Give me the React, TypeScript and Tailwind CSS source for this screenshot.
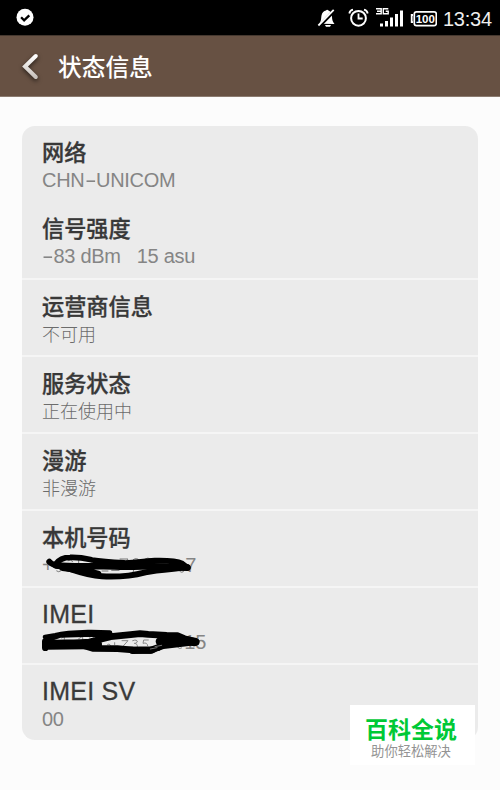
import React from "react";

const cjk = "font-['Noto_Sans_CJK_SC',sans-serif]";
const latin = "font-['Liberation_Sans','Noto_Sans_CJK_SC',sans-serif]";

function Dash() {
  return <span className="inline-block w-[11.4px] origin-left scale-x-[1.75]">-</span>;
}

function Title({ children, western = false }: { children: React.ReactNode; western?: boolean }) {
  return western ? (
    <div className={`${latin} h-[31px] text-[25px] leading-[32px] tracking-[0.25px] text-[#3a3a3a] [-webkit-text-stroke:0.3px_#3a3a3a]`}>{children}</div>
  ) : (
    <div className={`${cjk} h-[31px] text-[22.2px] leading-[30px] font-medium text-[#383838] [-webkit-text-stroke:0.3px_#383838]`}>{children}</div>
  );
}

function Value({ children, western = false }: { children: React.ReactNode; western?: boolean }) {
  return western ? (
    <div className={`${latin} h-[25px] whitespace-pre text-[20px] leading-[26px] tracking-[-0.26px] text-[#858585]`}>{children}</div>
  ) : (
    <div className={`${cjk} h-[25px] text-[18px] leading-[25px] font-light text-[#6c6c6c]`}>{children}</div>
  );
}

function Row({ children, first = false, last = false }: { children: React.ReactNode; first?: boolean; last?: boolean }) {
  return (
    <div className={`pt-[10px] pl-5 ${first ? "h-[76.4px]" : "h-[77.15px]"} ${first || last ? "" : "border-b-2 border-[#f5f5f5]"}`}>{children}</div>
  );
}

function PhoneScribble() {
  return (
    <svg className="absolute -left-3 -top-[7px]" width="190" height="45" viewBox="0 0 570 135" fill="none" stroke="#000" strokeLinecap="round" strokeLinejoin="round">
      <path d="M114 47q8-5 14 2M146 46v8M176 49h10M270 42h24l-10 14M310 44q10-8 18 2M345 42q8-6 18 0M372 60q10 8 20 0M405 60q8 6 16 0M216 78h18M245 76h22M312 74q-8 10 4 9M446 72q4 14 14 8q8-8 0-16M80 78q6 5 12 0" stroke="#777" strokeWidth="3" />
      <path d="M58 50C70 63 86 62 104 67C138 78 174 92 215 94C266 97 312 91 346 82C378 75 414 73 472 67" strokeWidth="18" />
      <path d="M76 58C88 42 102 37 120 37C154 36 166 40 186 45C220 50 254 52 286 54C324 54 337 48 374 47C414 46 442 49 457 56L473 68" strokeWidth="17" />
      <path d="M78 61C138 67 196 62 254 64C322 67 371 60 428 66L472 68M98 68L166 77L204 87" strokeWidth="20" />
    </svg>
  );
}

function ImeiScribble() {
  return (
    <svg className="absolute -left-3 -top-[9px]" width="190" height="45" viewBox="0 0 570 135" fill="none" stroke="#000" strokeLinecap="round" strokeLinejoin="round">
      <path d="M95 54l8-4v8M146 56l12-7v10M178 51q8-6 14 1M232 74q5-6 10 2M254 74v-6M276 62h18l-16 18M308 62q14-5 14 4q-4 5-9 4q11 1 9 11M355 60h-14l-2 10q13-4 14 7M443 82q5 7 12 2" stroke="#888" strokeWidth="3" />
      <path d="M45 51L76 46C110 37 145 37 184 36L240 38M46 62L92 46L184 43L244 46" strokeWidth="14" />
      <path d="M46 65L46 83M52 70C92 68 145 69 178 66L242 50L302 44L330 41L355 43L410 46L442 47L463 56L499 66M50 79L166 78" strokeWidth="20" />
      <path d="M51 71L184 71L206 73M158 76L188 85L262 86L309 90L360 91L400 77L494 66" strokeWidth="20" />
      <path d="M390 64L412 54L456 59L494 66" strokeWidth="26" />
      <path d="M278 87L385 86M306 95L365 94L395 80" strokeWidth="14" />
      <path d="M361 87L381 83M375 80L395 76" stroke="#aaa" strokeWidth="2" />
    </svg>
  );
}

function StatusBar() {
  return (
    <header className="flex h-[35px] items-center bg-black text-white">
      <svg className="ml-4" width="18" height="35" viewBox="0 0 18 35"><circle cx="9" cy="17.3" r="8.5" fill="white" /><path d="M5.1 17.3l3 3 5.2-5" fill="none" stroke="black" strokeWidth="2.3" /></svg>
      <svg className="ml-auto" width="120" height="35" viewBox="317 0 120 35" fill="none">
        <path d="M319 23.8C321.5 21.5 321 18 321.5 15.5C322 12.5 324 11 326 10.5Q327 9 328.5 10.5C331 11.5 332 14 332 17C332 20 333 22 334.5 24ZM325 25h6l-1 1.8h-4z" fill="#fff" />
        <path d="M318.8 26.5L334 11" stroke="#000" strokeWidth="3.5" />
        <path d="M318.4 25.5L333.7 9.8" stroke="#fff" strokeWidth="1.8" />
        <circle cx="358.5" cy="18.3" r="7.4" stroke="#fff" strokeWidth="2" />
        <path d="M358.5 13.5v5h4.2M349.3 13.5c.4-2 1.7-3.4 3.7-3.8M367.7 13.5c-.4-2-1.7-3.4-3.7-3.8" stroke="#fff" strokeWidth="1.8" />
        <path d="M376 8.8h5.2v5H376M377 11.3h4M388.3 8.8h-5v5h4.9v-2.6h-2.5" stroke="#fff" strokeWidth="1.4" />
        <path d="M380 23.5h3v3h-3zM385 21h3v5.5h-3zM390 17.5h3v9h-3zM395 14h3v12.5h-3zM400 10.5h3v16h-3z" fill="#fff" />
        <rect x="414.3" y="11.8" width="22" height="13.8" rx="2.2" stroke="#fff" strokeWidth="1.7" />
        <path d="M413 15h-1.3v7.2h1.3" stroke="#fff" strokeWidth="1.8" />
        <text x="425.3" y="23" textAnchor="middle" textLength="19" fill="#fff" fontFamily="Liberation Sans, sans-serif" fontSize="11.5" fontWeight="bold">100</text>
      </svg>
      <span className={`${latin} mr-2 ml-[6px] mt-[3px] w-[49px] text-[20px] leading-8 tracking-[-0.25px] text-[#eee]`}>13:34</span>
    </header>
  );
}

export default function App() {
  return (
    <main className="relative h-[790px] w-[500px] overflow-hidden bg-[#fcfcfc]">
      <StatusBar />
      <nav className="flex h-[62px] items-center border-t border-b border-t-[#45382f] border-b-[#8b7b70] bg-[#675143]">
        <svg className="ml-5 drop-shadow-[0_2px_2px_rgba(0,0,0,0.6)]" width="22" height="30" viewBox="0 0 22 30">
          <defs><linearGradient id="back" x1="0" x2="0" y1="0" y2="1"><stop stopColor="#fff" /><stop offset="1" stopColor="#c9c2bd" /></linearGradient></defs>
          <path d="M15.8 5L5 15.5L15.8 26" fill="none" stroke="url(#back)" strokeWidth="4" strokeLinecap="round" />
        </svg>
        <h1 className={`${cjk} ml-[16px] text-[23.7px] leading-8 font-medium text-white`}>状态信息</h1>
      </nav>
      <section className="mx-[22px] mt-[29px] h-[614px] overflow-hidden rounded-[13px] bg-[#ebebeb]">
        <Row first><Title>网络</Title><Value western>CHN<Dash />UNICOM</Value></Row>
        <Row><Title>信号强度</Title><Value western><Dash />83 dBm{"  "} 15 asu</Value></Row>
        <Row><Title>运营商信息</Title><Value>不可用</Value></Row>
        <Row><Title>服务状态</Title><Value>正在使用中</Value></Row>
        <Row><Title>漫游</Title><Value>非漫游</Value></Row>
        <Row><Title>本机号码</Title><div className="relative w-[154px]"><Value western><span className="flex justify-between"><span>+</span><span>7</span></span></Value><PhoneScribble /></div></Row>
        <Row><Title western>IMEI</Title><div className="relative w-[164px]"><Value western><span className="block text-right">15</span></Value><ImeiScribble /></div></Row>
        <Row last><Title western>IMEI SV</Title><Value western>00</Value></Row>
      </section>
      <aside className={`${cjk} absolute left-[350px] top-[705px] flex h-[60px] w-[125px] flex-col items-center bg-white pt-[8px] pr-[3px]`}>
        <div className="h-[29px] text-[23px] leading-[30px] font-bold text-[#00c936]">百科全说</div>
        <div className="text-[13.3px] leading-[18px] text-[#939393]">助你轻松解决</div>
      </aside>
    </main>
  );
}
